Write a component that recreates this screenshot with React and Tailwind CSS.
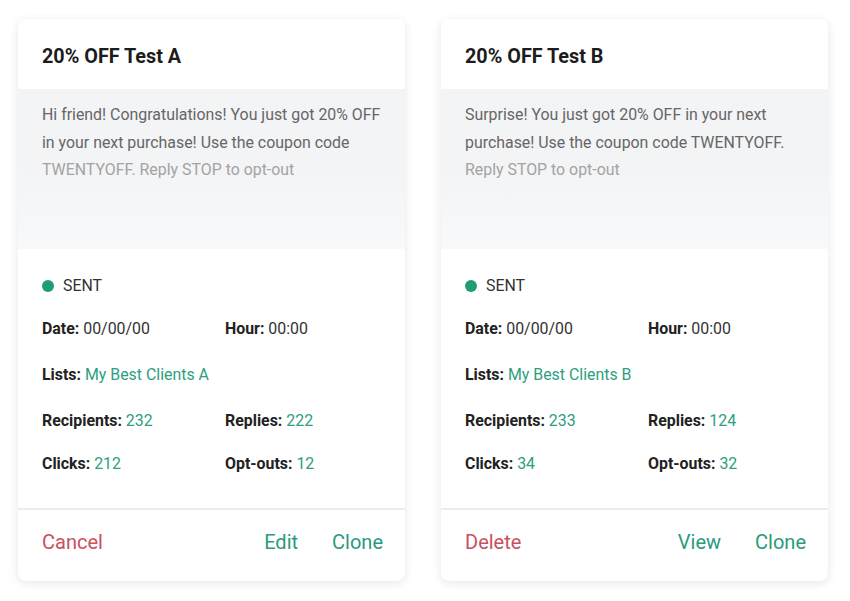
import React from "react";

const cards = [
  {
    title: "20% OFF Test A",
    lines: [
      "Hi friend! Congratulations! You just got 20% OFF",
      "in your next purchase! Use the coupon code",
    ],
    faded: "TWENTYOFF. Reply STOP to opt-out",
    list: "My Best Clients A",
    recipients: "232",
    replies: "222",
    clicks: "212",
    optouts: "12",
    left: "Cancel",
    mid: "Edit",
  },
  {
    title: "20% OFF Test B",
    lines: [
      "Surprise! You just got 20% OFF in your next",
      "purchase! Use the coupon code TWENTYOFF.",
    ],
    faded: "Reply STOP to opt-out",
    list: "My Best Clients B",
    recipients: "233",
    replies: "124",
    clicks: "34",
    optouts: "32",
    left: "Delete",
    mid: "View",
  },
];

function Field({ label, value, green }) {
  return (
    <div className="whitespace-nowrap">
      <span className="font-bold text-[#222]">{label}:</span>{" "}
      <span className={green ? "text-[#2d9e80]" : "text-[#333]"}>{value}</span>
    </div>
  );
}

function Card({ c }) {
  return (
    <div className="w-[387px] h-[562px] bg-white rounded-[8px] shadow-[0_2px_10px_rgba(0,0,0,0.10)] flex flex-col overflow-hidden">
      <div className="h-[70px] flex items-center px-6 pt-[5px]">
        <h2 className="text-[19.8px] font-bold text-[#1c1c1c]">{c.title}</h2>
      </div>
      <div className="h-[160px] bg-gradient-to-b from-[#f3f4f6] via-[#f3f4f6] to-[#f8f9fa] px-6 pt-[12px] text-[15.9px] leading-[27.5px]">
        {c.lines.map((l) => (
          <div key={l} className="text-[#666] whitespace-nowrap">{l}</div>
        ))}
        <div className="text-[#a3a3a3]">{c.faded}</div>
      </div>
      <div className="flex-1 px-6 pt-[26px] text-[15.9px] leading-[22px]">
        <div className="flex items-center gap-[9px]">
          <span className="w-[12px] h-[12px] rounded-full bg-[#1f9d77]" />
          <span className="text-[#333]">SENT</span>
        </div>
        <div className="grid grid-cols-[183px_1fr] mt-[21px]">
          <Field label="Date" value="00/00/00" />
          <Field label="Hour" value="00:00" />
        </div>
        <div className="mt-[24px]">
          <Field label="Lists" value={c.list} green />
        </div>
        <div className="grid grid-cols-[183px_1fr] mt-[24px]">
          <Field label="Recipients" value={c.recipients} green />
          <Field label="Replies" value={c.replies} green />
        </div>
        <div className="grid grid-cols-[183px_1fr] mt-[21px]">
          <Field label="Clicks" value={c.clicks} green />
          <Field label="Opt-outs" value={c.optouts} green />
        </div>
      </div>
      <div className="h-[73px] border-t-2 border-[#ececec] flex items-center px-6 pb-[8px] text-[20px]">
        <span className="text-[#c8505f]">{c.left}</span>
        <span className="ml-auto text-[#2a9a7c]">{c.mid}</span>
        <span className="ml-[34px] text-[#2a9a7c] mr-[-2px]">Clone</span>
      </div>
    </div>
  );
}

export default function App() {
  return (
    <div
      className="w-[850px] h-[601px] bg-white flex gap-[36px] pl-[18px] pt-[19px]"
      style={{ fontFamily: "Roboto, 'Liberation Sans', sans-serif" }}
    >
      {cards.map((c) => (
        <Card key={c.title} c={c} />
      ))}
    </div>
  );
}
